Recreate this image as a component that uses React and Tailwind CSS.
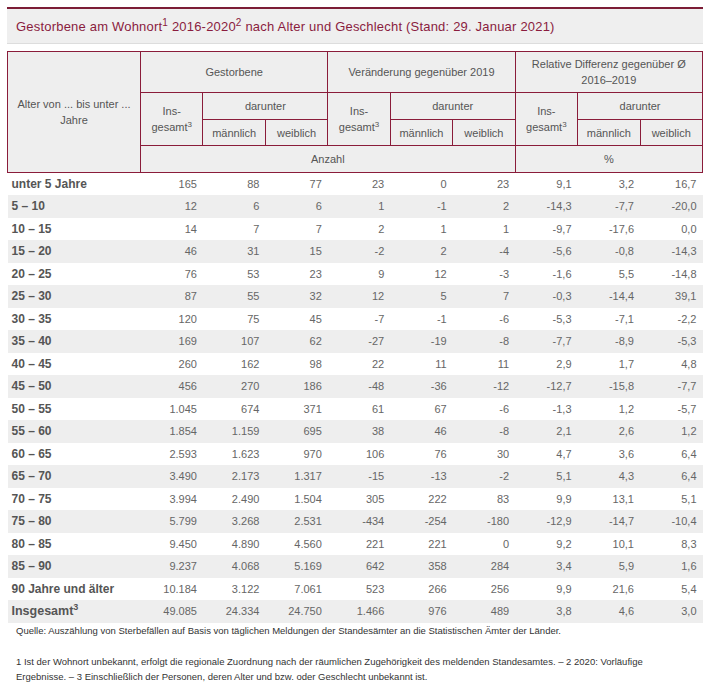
const rows = [
  ["unter 5 Jahre", "165", "88", "77", "23", "0", "23", "9,1", "3,2", "16,7"],
  ["5 – 10", "12", "6", "6", "1", "-1", "2", "-14,3", "-7,7", "-20,0"],
  ["10 – 15", "14", "7", "7", "2", "1", "1", "-9,7", "-17,6", "0,0"],
  ["15 – 20", "46", "31", "15", "-2", "2", "-4", "-5,6", "-0,8", "-14,3"],
  ["20 – 25", "76", "53", "23", "9", "12", "-3", "-1,6", "5,5", "-14,8"],
  ["25 – 30", "87", "55", "32", "12", "5", "7", "-0,3", "-14,4", "39,1"],
  ["30 – 35", "120", "75", "45", "-7", "-1", "-6", "-5,3", "-7,1", "-2,2"],
  ["35 – 40", "169", "107", "62", "-27", "-19", "-8", "-7,7", "-8,9", "-5,3"],
  ["40 – 45", "260", "162", "98", "22", "11", "11", "2,9", "1,7", "4,8"],
  ["45 – 50", "456", "270", "186", "-48", "-36", "-12", "-12,7", "-15,8", "-7,7"],
  ["50 – 55", "1.045", "674", "371", "61", "67", "-6", "-1,3", "1,2", "-5,7"],
  ["55 – 60", "1.854", "1.159", "695", "38", "46", "-8", "2,1", "2,6", "1,2"],
  ["60 – 65", "2.593", "1.623", "970", "106", "76", "30", "4,7", "3,6", "6,4"],
  ["65 – 70", "3.490", "2.173", "1.317", "-15", "-13", "-2", "5,1", "4,3", "6,4"],
  ["70 – 75", "3.994", "2.490", "1.504", "305", "222", "83", "9,9", "13,1", "5,1"],
  ["75 – 80", "5.799", "3.268", "2.531", "-434", "-254", "-180", "-12,9", "-14,7", "-10,4"],
  ["80 – 85", "9.450", "4.890", "4.560", "221", "221", "0", "9,2", "10,1", "8,3"],
  ["85 – 90", "9.237", "4.068", "5.169", "642", "358", "284", "3,4", "5,9", "1,6"],
  ["90 Jahre und älter", "10.184", "3.122", "7.061", "523", "266", "256", "9,9", "21,6", "5,4"],
];

const total = ["49.085", "24.334", "24.750", "1.466", "976", "489", "3,8", "4,6", "3,0"];

const th = "border border-[#8a1c3a] bg-[#eeeeee] font-normal text-center align-middle px-1 leading-[16px]";

export default function App() {
  return (
    <div className="w-[715px] h-[690px] bg-white font-['Liberation_Sans',Arial,sans-serif] text-[#555]">
      <div className="ml-[7px] w-[696px] pt-[7px]">
        {/* title box */}
        <div className="border-t-2 border-[#7c1d36] bg-[#efefef] border-b border-b-[#dddddd] h-[37px] flex items-center pl-[9px] pt-[2px]">
          <h1 className="text-[13px] text-[#8a1c3e] tracking-[0.2px]">
            Gestorbene am Wohnort<sup className="text-[10px]">1</sup> 2016-2020<sup className="text-[10px]">2</sup> nach Alter und Geschlecht (Stand: 29. Januar 2021)
          </h1>
        </div>

        <table className="mt-[7px] w-full table-fixed border-collapse text-[11px]">
          <colgroup>
            <col className="w-[133px]" />
            <col /><col /><col /><col /><col /><col /><col /><col /><col />
          </colgroup>
          <thead>
            <tr className="h-[41px]">
              <th rowSpan={4} className={th}>Alter von ... bis unter ...<br />Jahre</th>
              <th colSpan={3} className={th}>Gestorbene</th>
              <th colSpan={3} className={th}>Veränderung gegenüber 2019</th>
              <th colSpan={3} className={th}>Relative Differenz gegenüber Ø<br />2016–2019</th>
            </tr>
            <tr className="h-[27px]">
              <th rowSpan={2} className={th}>Ins-<br />gesamt<sup className="text-[8px]">3</sup></th>
              <th colSpan={2} className={th}>darunter</th>
              <th rowSpan={2} className={th}>Ins-<br />gesamt<sup className="text-[8px]">3</sup></th>
              <th colSpan={2} className={th}>darunter</th>
              <th rowSpan={2} className={th}>Ins-<br />gesamt<sup className="text-[8px]">3</sup></th>
              <th colSpan={2} className={th}>darunter</th>
            </tr>
            <tr className="h-[26px]">
              <th className={th}>männlich</th>
              <th className={th}>weiblich</th>
              <th className={th}>männlich</th>
              <th className={th}>weiblich</th>
              <th className={th}>männlich</th>
              <th className={th}>weiblich</th>
            </tr>
            <tr className="h-[27px]">
              <th colSpan={6} className={th}>Anzahl</th>
              <th colSpan={3} className={th}>%</th>
            </tr>
          </thead>
          <tbody>
            {rows.map((r, i) => (
              <tr key={r[0]} className={`h-[22.5px] ${i % 2 === 1 ? "bg-[#eeeeee]" : "bg-white"}`}>
                <td className="pl-[4px] text-[12px] font-bold text-[#555] whitespace-nowrap">{r[0]}</td>
                {r.slice(1).map((v, j) => (
                  <td key={j} className="pr-[6px] text-right text-[#666]">{v}</td>
                ))}
              </tr>
            ))}
            <tr className="h-[22.5px] bg-[#eeeeee]">
              <td className="pl-[4px] text-[12.5px] font-bold text-[#555]">
                Insgesamt<sup className="text-[9px]">3</sup>
              </td>
              {total.map((v, j) => (
                <td key={j} className="pr-[6px] text-right text-[#666]">{v}</td>
              ))}
            </tr>
          </tbody>
        </table>

        <div className="pl-[9px] w-[650px] text-[9.5px] text-[#333]">
          <p className="leading-[15px]">
            Quelle: Auszählung von Sterbefällen auf Basis von täglichen Meldungen der Standesämter an die Statistischen Ämter der Länder.
          </p>
          <p className="leading-[15px] mt-[16px]">
            1 Ist der Wohnort unbekannt, erfolgt die regionale Zuordnung nach der räumlichen Zugehörigkeit des meldenden Standesamtes. – 2 2020: Vorläufige Ergebnisse. – 3 Einschließlich der Personen, deren Alter und bzw. oder Geschlecht unbekannt ist.
          </p>
        </div>
      </div>
    </div>
  );
}
